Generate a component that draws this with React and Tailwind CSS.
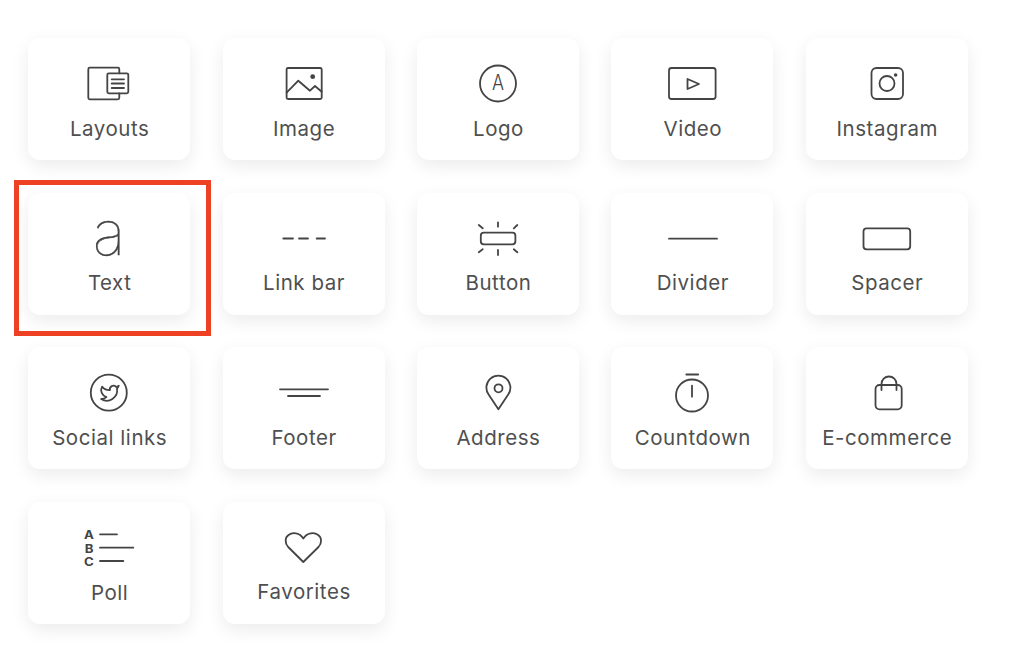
import React from "react";

const S = { fill: "none", stroke: "#444", strokeWidth: 1.8, strokeLinecap: "round", strokeLinejoin: "round" };
const L = ({ d }) => <path d={d} {...S} />;

const items = [
  ["Layouts", <>
    <L d="M40.3 15.3V11.2a1.5 1.5 0 0 0-1.5-1.5H10.8a1.5 1.5 0 0 0-1.5 1.5v28.6a1.5 1.5 0 0 0 1.5 1.5h28a1.5 1.5 0 0 0 1.5-1.5v-4.5" />
    <rect x="28.3" y="15.3" width="21" height="20" rx="1.5" {...S} />
    <L d="M32.7 21.3H45M32.7 25.5H45M32.7 30H45" />
  </>],
  ["Image", <>
    <rect x="12.6" y="10" width="35.1" height="31" rx="1.5" {...S} />
    <circle cx="38.7" cy="18.7" r="2.4" fill="#444" />
    <L d="M12.6 34.7L24.3 22.7L36 32.7L41 28L47.7 33.7" />
  </>],
  ["Logo", <>
    <circle cx="30" cy="25.5" r="18" {...S} />
    <text transform="translate(30 32.3) scale(0.85 1)" textAnchor="middle" fontSize="21" fontWeight="300" fill="#444">A</text>
  </>],
  ["Video", <>
    <rect x="7" y="10" width="46.6" height="31" rx="2.5" {...S} />
    <L d="M25.5 21L37 26L25.5 31Z" />
  </>],
  ["Instagram", <>
    <rect x="14.5" y="10" width="31.5" height="31" rx="5" {...S} />
    <circle cx="30" cy="25.5" r="7.5" {...S} />
    <circle cx="38.6" cy="17" r="1.8" fill="#444" />
  </>],
  ["Text", <>
    <text x="30" y="42" textAnchor="middle" fontSize="62" fontWeight="100" fill="#444" stroke="#444" strokeWidth="0.35">a</text>
  </>],
  ["Link bar", <L d="M9.3 25.5H19M25 25.5H34M42.7 25.5H51" />],
  ["Button", <>
    <rect x="12.8" y="19.7" width="34.6" height="11.6" rx="3" {...S} />
    <L d="M30 9.3V13.7M10.8 12L14.7 15.3M49.3 12L45.8 15.3M30 37V42M10.8 39.3L14.7 36.3M49.3 39.3L45.8 36.3" />
  </>],
  ["Divider", <L d="M7 25.7H55" />],
  ["Spacer", <rect x="6.5" y="15.3" width="46.7" height="21" rx="3" {...S} />],
  ["Social links", <>
    <circle cx="29.8" cy="25.7" r="18" {...S} />
    <g transform="translate(20.4 15.2) scale(0.88)">
      <path d="M22 4s-.7 2.1-2 3.4c1.6 10-9.4 17.3-18 11.6 2.2.1 4.4-.6 6-2C3 15.5.5 9.6 3 5c2.2 2.6 5.6 4.1 9 4-.9-4.2 4-6.6 7-3.8 1.1 0 3-1.2 3-1.2z" {...S} strokeWidth="2" />
    </g>
  </>],
  ["Footer", <L d="M6 22.3H54M14 29H46" />],
  ["Address", <>
    <L d="M30.4 42.3L20.6 27.5A12 12 0 1 1 40.2 27.5Z" />
    <circle cx="30.5" cy="21.3" r="4" {...S} />
  </>],
  ["Countdown", <>
    <circle cx="30" cy="28.5" r="16" {...S} />
    <L d="M30 18.7V29.7M24.3 7.5H36.2" />
  </>],
  ["E-commerce", <>
    <rect x="18.5" y="18" width="26.2" height="24.3" rx="4" {...S} />
    <L d="M24.5 23V17a7.5 7.5 0 0 1 15 0V23" />
  </>],
  ["Poll", <>
    <text transform="translate(10 17) scale(1.15 1)" textAnchor="middle" fontSize="11.5" fontWeight="700" fill="#444">A</text>
    <text transform="translate(10 30.5) scale(1.15 1)" textAnchor="middle" fontSize="11.5" fontWeight="700" fill="#444">B</text>
    <text transform="translate(10 43.7) scale(1.15 1)" textAnchor="middle" fontSize="11.5" fontWeight="700" fill="#444">C</text>
    <L d="M21 12.3H38M21 25.7H54.3M21 39H44.3" />
  </>],
  ["Favorites", <L d="M29.3 40L14.2 25C10.5 21 11 15.5 14.5 13C18.5 10 25.5 10.5 29.3 16.5C33.2 10.5 40.2 10 44.2 13C47.7 15.5 48.2 21 44.5 25Z" />],
];

function Card({ label, icon }) {
  return (
    <div className="relative flex h-[122px] flex-col items-center rounded-xl bg-white pt-5 shadow-[0_6px_18px_rgba(0,0,0,0.08)]">
      <svg width="60" height="50" viewBox="0 0 60 50" className="block overflow-visible">{icon}</svg>
      <span className={`${label === "Poll" ? "mt-[9.6px]" : "mt-[8.6px]"} ml-px whitespace-nowrap text-[20.5px] leading-6 font-normal tracking-[0.55px] text-[#4f4f4f]`}>{label}</span>
      {label === "Text" && (
        <div className="absolute left-[-14px] top-[-13px] h-[156px] w-[197px] border-[5px] border-[#ee4023]" />
      )}
    </div>
  );
}

export default function App() {
  return (
    <div className="min-h-screen bg-white pl-[28.2px] pt-[38px] font-['Inter',sans-serif]">
      <div className="grid grid-cols-[repeat(5,162px)] gap-x-[32.4px] gap-y-[32.6px]">
        {items.map(([label, icon]) => (
          <Card key={label} label={label} icon={icon} />
        ))}
      </div>
    </div>
  );
}
